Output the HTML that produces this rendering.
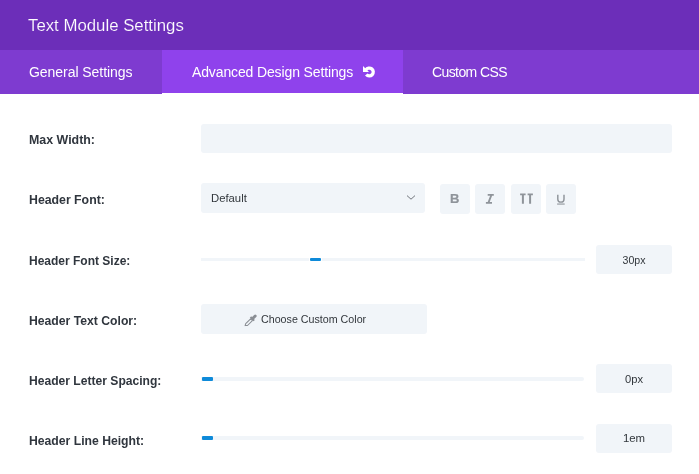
<!DOCTYPE html>
<html>
<head>
<meta charset="utf-8">
<style>
html,body{margin:0;padding:0;}
body{width:699px;height:474px;overflow:hidden;background:#fff;position:relative;font-family:"Liberation Sans",sans-serif;}
.abs{position:absolute;}
.t{will-change:transform;}
#hdr{left:0;top:0;width:699px;height:50px;background:#6c2eb9;}
#title{left:28px;top:17px;font-size:16.8px;line-height:17px;color:#fff;-webkit-text-stroke:0.15px #6c2eb9;white-space:nowrap;}
#tabs{left:0;top:50px;width:699px;height:44px;background:#7e3bd0;}
#tabact{left:162px;top:50px;width:241px;height:43px;background:#8f42ec;}
.tab{top:65px;font-size:14px;line-height:14px;color:#fff;white-space:nowrap;}
.lbl{left:29px;font-size:12.4px;line-height:12px;font-weight:bold;color:#30363e;white-space:nowrap;}
.box{background:#f1f5f9;border-radius:3px;}
.val{font-size:11px;line-height:11px;color:#32373c;white-space:nowrap;}
.track{background:#f1f5f9;}
.thumb{background:#0e8ad9;border-radius:1px;}
.btn{width:30px;height:30px;background:#f1f5f9;border-radius:3px;top:184px;}
</style>
</head>
<body>
<div id="hdr" class="abs"></div>
<div id="title" class="abs t">Text Module Settings</div>
<div id="tabs" class="abs"></div>
<div id="tabact" class="abs"></div>
<div class="abs" style="left:162px;top:93px;width:241px;height:1px;background:#fff;"></div>
<div class="abs tab t" style="left:28.5px;font-size:14px;letter-spacing:-0.05px;">General Settings</div>
<div class="abs tab t" style="left:192px;top:65px;font-size:14px;letter-spacing:-0.13px;">Advanced Design Settings</div>
<svg class="abs" style="left:360px;top:63px;" width="18" height="18" viewBox="0 0 18 18">
  <path d="M5.95 6.91 A3.95 3.95 0 1 1 6.27 11.54" fill="none" stroke="#fff" stroke-width="3.3"/>
  <path d="M3 3 L3 9 L9 9 Z" fill="#fff"/>
</svg>
<div class="abs tab t" style="left:431.5px;top:65px;font-size:14px;letter-spacing:-0.6px;">Custom CSS</div>

<!-- labels -->
<div class="abs lbl t" style="top:134px;font-size:12.4px;">Max Width:</div>
<div class="abs lbl t" style="top:194px;font-size:12.3px;">Header Font:</div>
<div class="abs lbl t" style="top:255px;font-size:12.0px;">Header Font Size:</div>
<div class="abs lbl t" style="top:315px;font-size:12.2px;">Header Text Color:</div>
<div class="abs lbl t" style="top:375px;font-size:12.1px;">Header Letter Spacing:</div>
<div class="abs lbl t" style="top:435px;font-size:12.2px;">Header Line Height:</div>

<!-- max width -->
<div class="abs box" style="left:201px;top:124px;width:471px;height:29px;"></div>

<!-- header font -->
<div class="abs box" style="left:201px;top:183px;width:224px;height:30px;"></div>
<div class="abs val t" style="left:211px;top:193px;font-size:11.3px;">Default</div>
<svg class="abs" style="left:406px;top:194px;" width="10" height="7" viewBox="0 0 10 7">
  <path d="M1 1.6 L5 5.2 L9 1.6" fill="none" stroke="#6a6f76" stroke-width="0.95"/>
</svg>
<div class="abs btn" style="left:440px;"></div>
<div class="abs btn" style="left:475px;"></div>
<div class="abs btn" style="left:511px;"></div>
<div class="abs btn" style="left:546px;"></div>
<div class="abs t" style="left:450px;top:192px;font-size:13px;line-height:13px;font-weight:bold;color:#8f949a;-webkit-text-stroke:0.2px #8f949a;">B</div>
<svg class="abs" style="left:485px;top:193px;" width="10" height="12" viewBox="0 0 10 12">
  <path d="M2.7 1 H8.8 V2.8 H2.7 Z M0.9 9 H7 V10.8 H0.9 Z M5.1 2.8 H7.1 L4.7 9 H2.7 Z" fill="#8f949a"/>
</svg>
<svg class="abs" style="left:519px;top:193px;" width="15" height="12" viewBox="0 0 15 12">
  <path d="M1.1 0.4 H6.6 V2.2 H4.9 V10.7 H2.9 V2.2 H1.1 Z M8.6 0.4 H13.9 V2.2 H12.1 V10.7 H10.1 V2.2 H8.6 Z" fill="#8f949a"/>
</svg>
<svg class="abs" style="left:556px;top:194px;" width="10" height="12" viewBox="0 0 10 12">
  <path d="M1.8 0.7 V5.2 Q1.8 8.1 4.9 8.1 Q8 8.1 8 5.2 V0.7" fill="none" stroke="#8f949a" stroke-width="1.45"/>
  <path d="M1.1 9.5 H8.7 V10.6 H1.1 Z" fill="#8f949a"/>
</svg>

<!-- font size -->
<div class="abs track" style="left:201px;top:258px;width:384px;height:3px;"></div>
<div class="abs" style="left:309px;top:257px;width:13px;height:5px;background:#fff;"></div>
<div class="abs thumb" style="left:310px;top:258px;width:11px;height:3px;"></div>
<div class="abs box" style="left:596px;top:245px;width:76px;height:29px;"></div>
<div class="abs val t" style="left:596px;width:76px;text-align:center;top:255px;font-size:10.6px;">30px</div>

<!-- text color -->
<div class="abs box" style="left:201px;top:304px;width:226px;height:30px;"></div>
<div class="abs val t" style="left:261px;top:314px;font-size:10.7px;">Choose Custom Color</div>
<svg class="abs" style="left:244px;top:314px;" width="14" height="14" viewBox="0 0 14 14">
  <path d="M1.1 11.6 L1.7 9.7 L6.6 4.8 L8.4 6.6 L3.5 11.5 Z" fill="none" stroke="#8a8e94" stroke-width="1.05" stroke-linejoin="round"/>
  <path d="M6.5 3.0 L10.2 6.7" fill="none" stroke="#8a8e94" stroke-width="1.9"/>
  <path d="M8.9 4.3 L11.2 2.0" fill="none" stroke="#8a8e94" stroke-width="2.9" stroke-linecap="round"/>
</svg>

<!-- letter spacing -->
<div class="abs track" style="left:201px;top:377px;width:383px;height:4px;border-radius:0 2px 2px 0;"></div>
<div class="abs thumb" style="left:202px;top:377px;width:11px;height:4px;"></div>
<div class="abs box" style="left:596px;top:364px;width:76px;height:29px;"></div>
<div class="abs val t" style="left:596px;width:76px;text-align:center;top:374px;font-size:11.2px;">0px</div>

<!-- line height -->
<div class="abs track" style="left:201px;top:436px;width:383px;height:4px;border-radius:0 2px 2px 0;"></div>
<div class="abs thumb" style="left:202px;top:436px;width:11px;height:4px;"></div>
<div class="abs box" style="left:596px;top:424px;width:76px;height:29px;"></div>
<div class="abs val t" style="left:596px;width:76px;text-align:center;top:433px;font-size:11.4px;">1em</div>
</body>
</html>
